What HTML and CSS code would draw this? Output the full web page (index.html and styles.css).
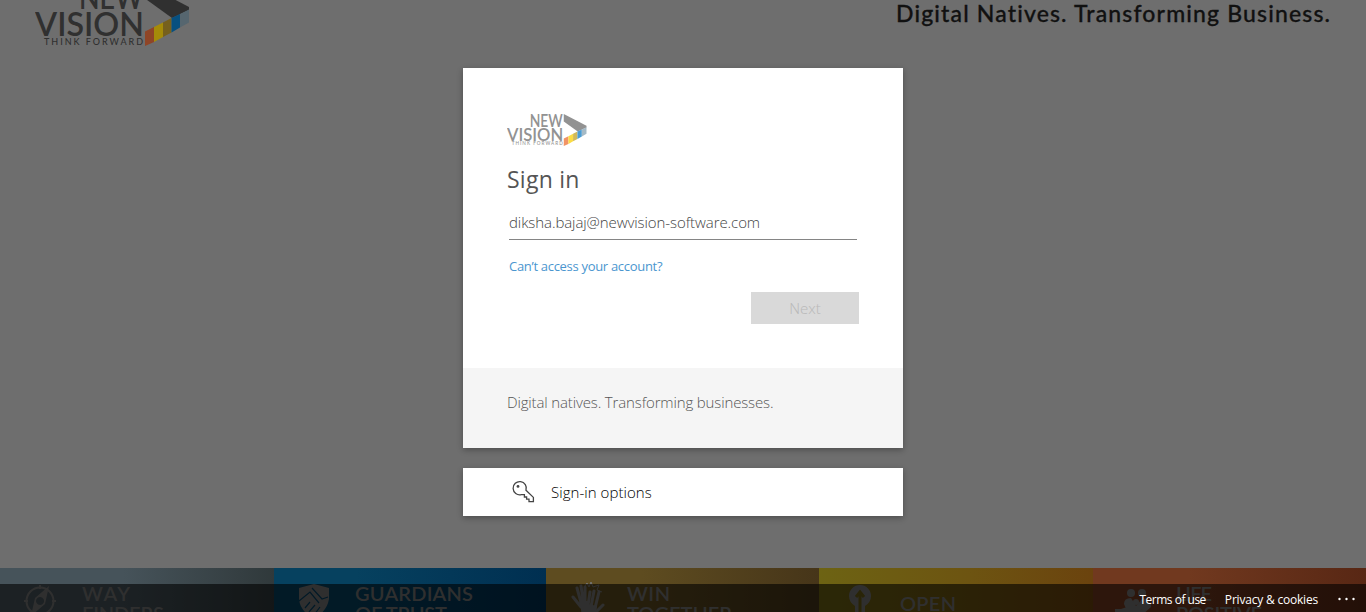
FILE: index.html
```html
<!DOCTYPE html>
<html lang="en">
<head>
<meta charset="utf-8">
<title>Sign in to your account</title>
<link rel="stylesheet" href="styles.css">
</head>
<body>
<svg class="defs" aria-hidden="true">
  <symbol id="logo" viewBox="0 0 155 62">
    <g class="logo-text">
      <text x="44" y="25" font-size="33.5" textLength="64" lengthAdjust="spacingAndGlyphs">NEW</text>
      <text x="0" y="52" font-size="33.5" textLength="109" lengthAdjust="spacingAndGlyphs">VISION</text>
      <text x="9" y="61" font-size="9" textLength="99" class="logo-tag">THINK FORWARD</text>
    </g>
    <path class="logo-arrow" d="M110 0 154 23V26L137 34 110 14.5Z"/>
    <path class="orange" d="M110 47.5 119 43V58L110 62Z"/>
    <path class="yellow" d="M119 43 128 38.5V53L119 58Z"/>
    <path class="gold" d="M128 38.5 136.5 34V48.5L128 53Z"/>
    <path class="blue" d="M136.5 34 145 30V43.5L136.5 48.5Z"/>
    <path class="silver" d="M145 30 154 25.5V38.5L145 43.5Z"/>
  </symbol>
</svg>
<header class="top">
  <svg class="brand"><use href="#logo"/></svg>
  <svg class="slogan" viewBox="0 0 436 34"><text x="1" y="22" textLength="434">Digital Natives. Transforming Business.</text></svg>
</header>
<main>
  <section class="card">
    <div class="login">
      <svg class="card-logo"><use href="#logo"/></svg>
      <h1>Sign in</h1>
      <div class="field">diksha.bajaj@newvision-software.com</div>
      <a class="help">Can’t access your account?</a>
      <button class="next">Next</button>
    </div>
    <p class="note">Digital natives. Transforming businesses.</p>
  </section>
  <section class="options">
    <svg class="key" viewBox="0 0 24 24"><path d="M9.2 14.6A6.6 6.6 0 1 1 14 10.2L21.4 17.4V21.6H17V19.2H14.6V17H12.4V14.6Z"/><circle cx="6" cy="6.4" r="1.4"/></svg>
    <span>Sign-in options</span>
  </section>
</main>
<div class="strip">
  <div class="value way">
    <svg viewBox="0 0 273 44">
      <g class="line"><circle cx="40" cy="33" r="13.5"/><path d="M40 17V21M24 33H28M52 33H56"/></g>
      <path d="M49 18 45 36 31 48 35 30ZM40 29a4 4 0 1 0 .1 0Z" fill-rule="evenodd"/>
      <text x="82" y="33" textLength="48">WAY</text><text x="82" y="53" textLength="82">FINDERS</text>
    </svg>
  </div>
  <div class="value guard">
    <svg viewBox="0 0 273 44">
      <path d="M25 20 40 16 55 20V31Q53 43 40 51 26 43 25 31Z"/>
      <path class="cut" d="M25 33 36 24 45 35M38 20 48 31 54 29M31 40 36 34M35 44 41 37M40 47 46 39"/>
      <text x="81" y="33" textLength="118">GUARDIANS</text><text x="81" y="53" textLength="92">OF TRUST</text>
    </svg>
  </div>
  <div class="value win">
    <svg viewBox="0 0 273 44">
      <g class="fingers"><path d="M27 29 35 39M31 20 36 38M35 18 38 38M39 19V36M44 24 41 44M48 23 44 44M53 24 48 44M57 37 49 45"/></g>
      <path d="M34 33H42V50H36ZM42 36 51 38 49 50H41Z"/>
      <path class="spark" d="M39 18 41 15 43 19 45 14 47 19 53 17 51 22 56 24"/>
      <text x="81" y="33" textLength="43">WIN</text><text x="81" y="53" textLength="105">TOGETHER</text>
    </svg>
  </div>
  <div class="value open">
    <svg viewBox="0 0 273 44">
      <path d="M36 50V38Q30 34 30 28A11 11 0 0 1 52 28Q52 34 46 38V50Z"/>
      <path class="arrow-cut" d="M41 50V25M37 29 41 24 45 29"/>
      <text x="81" y="43" textLength="56">OPEN</text>
    </svg>
  </div>
  <div class="value life">
    <svg viewBox="0 0 273 44">
      <circle cx="38" cy="25" r="4"/><circle cx="49" cy="25" r="4"/><circle cx="43" cy="34" r="3"/>
      <path d="M31 36Q31 30 38 30L43 38 50 30Q56 31 56 37L46 43H34ZM22 41H28L37 38 48 42 58 35V39L49 47H22Z"/>
      <text x="83" y="33" textLength="36">LIFE</text><text x="83" y="53" textLength="86">POSITIVE</text>
    </svg>
  </div>
  <footer>
    <a class="terms">Terms of use</a>
    <a class="privacy">Privacy &amp; cookies</a>
    <svg class="dots" viewBox="0 0 18 4"><circle cx="1.5" cy="2" r="1.2"/><circle cx="8.5" cy="2" r="1.2"/><circle cx="15.5" cy="2" r="1.2"/></svg>
  </footer>
</div>
</body>
</html>
```
FILE: styles.css
```css
* { box-sizing: border-box; }
body {
  margin: 0;
  height: 612px;
  overflow: hidden;
  display: grid;
  grid-template-rows: 68px 500px 44px;
  background: #6e6e6e;
  font-family: "Open Sans", "Noto Sans", sans-serif;
}
svg { display: block; }
.defs { position: absolute; width: 0; height: 0; }
.top { display: flex; justify-content: space-between; align-items: flex-start; padding: 0 35px; }
.brand { width: 155px; height: 62px; margin-top: -16px; color: #303030;
  --o: #8f4527; --y: #a58b09; --g: #76601d; --b: #075080; --s: #56666f; }
.slogan { width: 436px; height: 34px; font: 500 23px Lato, sans-serif; font-variant-ligatures: none; fill: #111; stroke: #111; stroke-width: .3; }
.logo-text { font-family: Lato, sans-serif; font-weight: 600; fill: currentColor; }
.logo-tag { font-weight: 500; }
.logo-arrow { fill: currentColor; }
.orange { fill: var(--o); }
.yellow { fill: var(--y); }
.gold { fill: var(--g); }
.blue { fill: var(--b); }
.silver { fill: var(--s); }
main { display: flex; flex-direction: column; align-items: center; gap: 20px; }
.card, .options { width: 440px; background: #fff; box-shadow: 0 2px 6px rgba(0, 0, 0, .3); }
.card { height: 380px; }
.login { height: 300px; padding: 46px 44px 0; display: flex; flex-direction: column; align-items: flex-start; }
.card-logo { width: 80px; height: 32px; color: #929292;
  --o: #f19466; --y: #fbdc45; --g: #d0b95b; --b: #4b9cd3; --s: #a5bac6; }
h1 { margin: 17px 0 0; font-size: 23px; line-height: 32px; font-weight: 500; letter-spacing: .25px; color: #555; }
.field { width: 348px; height: 36px; margin: 9px 0 0 2px; padding-top: 7px; border-bottom: 1px solid #858585; font-size: 15px; line-height: 22px; font-weight: 300; letter-spacing: -.08px; color: #444; }
.help { margin: 16px 0 0 2px; font-size: 13px; line-height: 20px; letter-spacing: -.3px; color: #4b96cf; }
.next { align-self: flex-end; width: 108px; height: 32px; margin: 16px 0 0; padding: 0; border: 0; background: #d9d9d9; color: #b8b8b8; font: 300 15px "Open Sans", sans-serif; }
.note { height: 80px; margin: 0; padding: 23px 44px; background: #f5f5f5; color: #555; font-size: 15px; line-height: 22px; font-weight: 300; letter-spacing: -.14px; }
.options { height: 48px; padding-left: 49px; display: flex; align-items: center; font-size: 15px; font-weight: 300; letter-spacing: .05px; color: #000; }
.key { width: 24px; height: 24px; margin-right: 15px; fill: none; stroke: #444; stroke-width: 1.3; }
.key circle { fill: #444; stroke: none; }
.strip { position: relative; display: grid; grid-template-columns: 274px 272px 273px 274px 1fr; overflow: hidden; }
.value svg { width: 273px; height: 44px; font: 600 20px Lato, sans-serif; fill: #777; }
.value .line { fill: none; stroke: #777; stroke-width: 2; }
.value .cut { fill: none; stroke: #064061; stroke-width: 1.2; }
.value .fingers { stroke: #777; stroke-width: 3; stroke-linecap: round; }
.value .spark { fill: none; stroke: #777; stroke-width: 1; }
.value .arrow-cut { fill: none; stroke: #665a13; stroke-width: 3; }
.way { background: linear-gradient(90deg, #46535a 45%, #30393b); }
.guard { background: linear-gradient(90deg, #06415f 30%, #002f51); }
.win { background: linear-gradient(90deg, #5e4c20 35%, #463519); }
.open { background: linear-gradient(90deg, #6d6313, #6d5411 55%, #6b430e); }
.life { background: linear-gradient(90deg, #71391f 35%, #582714); }
footer { position: absolute; inset: 16px 0 0; display: flex; align-items: center; justify-content: flex-end; padding: 2px 10px 0 0; background: rgba(0, 0, 0, .6); color: #fff; font-size: 12px; letter-spacing: -.2px; }
.terms { letter-spacing: -.5px; }
.privacy { margin: 0 20px 0 19px; }
.dots { width: 18px; height: 4px; fill: #fff; }
```
